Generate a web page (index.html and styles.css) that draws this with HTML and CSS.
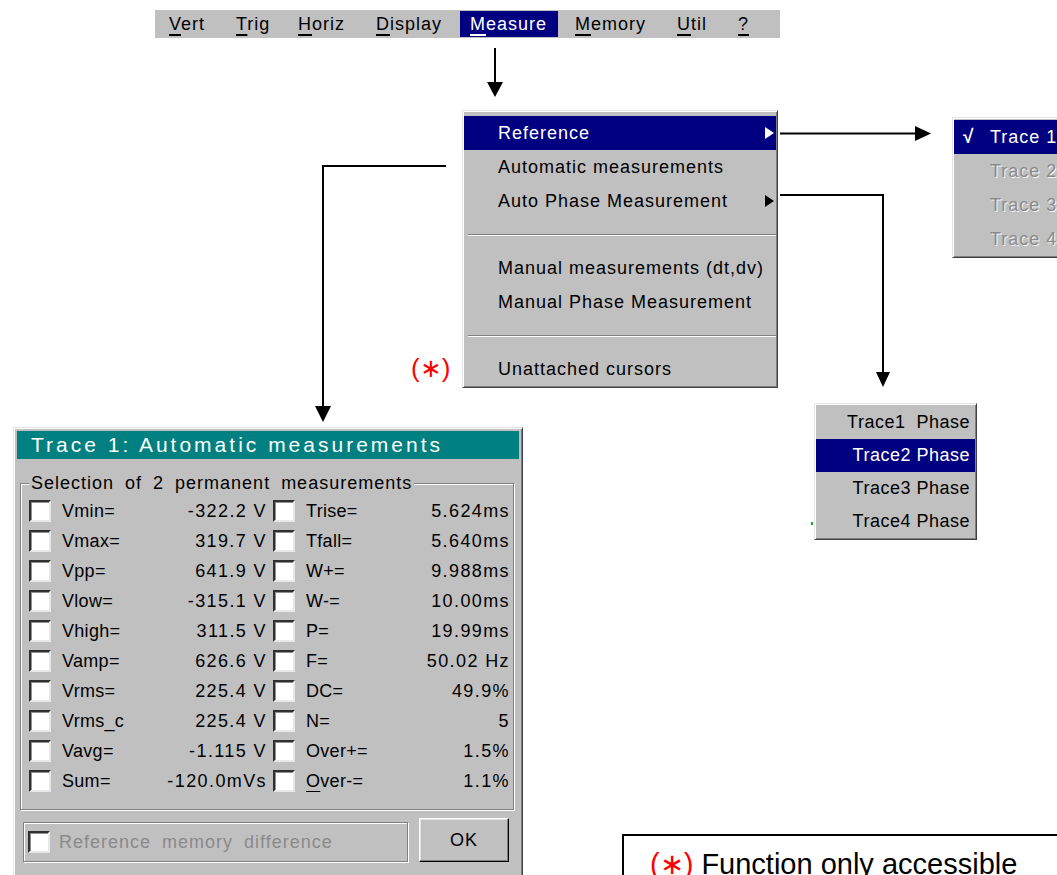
FILE: index.html
```html
<!DOCTYPE html>
<html lang="en">
<head>
<meta charset="utf-8">
<title>Measure menu</title>
<link rel="stylesheet" href="styles.css">
</head>
<body>
<div class="canvas">
  <svg class="wires" width="1057" height="875" viewBox="0 0 1057 875" aria-hidden="true">
    <g stroke="#000" stroke-width="2" fill="none">
      <path d="M495 48 V84"/>
      <path d="M780 133.5 H917"/>
      <path d="M780 195 H883 V374"/>
      <path d="M446 166 H323 V408"/>
    </g>
    <g fill="#000">
      <path d="M487 82 H503 L495 97 Z"/>
      <path d="M915 126 V141 L931 133.5 Z"/>
      <path d="M876 372 H890 L883 387 Z"/>
      <path d="M315 406 H331 L323 422 Z"/>
    </g>
  </svg>

  <nav class="menubar">
    <span class="mb-item"><u>V</u>ert</span>
    <span class="mb-item"><u>T</u>rig</span>
    <span class="mb-item"><u>H</u>oriz</span>
    <span class="mb-item"><u>D</u>isplay</span>
    <span class="mb-item mb-active"><u>M</u>easure</span>
    <span class="mb-item"><u>M</u>emory</span>
    <span class="mb-item"><u>U</u>til</span>
    <span class="mb-item"><u>?</u></span>
  </nav>

  <div class="menu measure-menu">
    <div class="mi hl">Reference<span class="tri"></span></div>
    <div class="mi">Automatic measurements</div>
    <div class="mi">Auto Phase Measurement<span class="tri"></span></div>
    <div class="sep"></div>
    <div class="mi">Manual measurements (dt,dv)</div>
    <div class="mi">Manual Phase Measurement</div>
    <div class="sep"></div>
    <div class="mi">Unattached cursors</div>
  </div>

  <span class="star star-menu">(∗)</span>

  <div class="menu trace-menu">
    <div class="ti hl"><span class="chk">√</span>Trace 1</div>
    <div class="ti dis"><span class="chk"></span>Trace 2</div>
    <div class="ti dis"><span class="chk"></span>Trace 3</div>
    <div class="ti dis"><span class="chk"></span>Trace 4</div>
  </div>

  <div class="menu phase-menu">
    <div class="pi">Trace1&nbsp; Phase</div>
    <div class="pi hl">Trace2 Phase</div>
    <div class="pi">Trace3 Phase</div>
    <div class="pi">Trace4 Phase</div>
  </div>
  <span class="dot"></span>

  <div class="dialog">
    <div class="dlg-title">Trace 1: Automatic measurements</div>
    <fieldset class="group">
      <legend>Selection of 2 permanent measurements</legend>
      <div class="grid">
        <div class="cell"><span class="cb"></span><span class="lbl">Vmin=</span><span class="val">-322.2 V</span></div>
        <div class="cell"><span class="cb"></span><span class="lbl">Trise=</span><span class="val">5.624ms</span></div>
        <div class="cell"><span class="cb"></span><span class="lbl">Vmax=</span><span class="val">319.7 V</span></div>
        <div class="cell"><span class="cb"></span><span class="lbl">Tfall=</span><span class="val">5.640ms</span></div>
        <div class="cell"><span class="cb"></span><span class="lbl">Vpp=</span><span class="val">641.9 V</span></div>
        <div class="cell"><span class="cb"></span><span class="lbl">W+=</span><span class="val">9.988ms</span></div>
        <div class="cell"><span class="cb"></span><span class="lbl">Vlow=</span><span class="val">-315.1 V</span></div>
        <div class="cell"><span class="cb"></span><span class="lbl">W-=</span><span class="val">10.00ms</span></div>
        <div class="cell"><span class="cb"></span><span class="lbl">Vhigh=</span><span class="val">311.5 V</span></div>
        <div class="cell"><span class="cb"></span><span class="lbl">P=</span><span class="val">19.99ms</span></div>
        <div class="cell"><span class="cb"></span><span class="lbl">Vamp=</span><span class="val">626.6 V</span></div>
        <div class="cell"><span class="cb"></span><span class="lbl">F=</span><span class="val">50.02 Hz</span></div>
        <div class="cell"><span class="cb"></span><span class="lbl">Vrms=</span><span class="val">225.4 V</span></div>
        <div class="cell"><span class="cb"></span><span class="lbl">DC=</span><span class="val">49.9%</span></div>
        <div class="cell"><span class="cb"></span><span class="lbl clip">Vrms_c</span><span class="val">225.4 V</span></div>
        <div class="cell"><span class="cb"></span><span class="lbl">N=</span><span class="val">5</span></div>
        <div class="cell"><span class="cb"></span><span class="lbl">Vavg=</span><span class="val">-1.115 V</span></div>
        <div class="cell"><span class="cb"></span><span class="lbl">Over+=</span><span class="val">1.5%</span></div>
        <div class="cell"><span class="cb"></span><span class="lbl">Sum=</span><span class="val">-120.0mVs</span></div>
        <div class="cell"><span class="cb"></span><span class="lbl"><u>O</u>ver-=</span><span class="val">1.1%</span></div>
      </div>
    </fieldset>
    <div class="dlg-foot">
      <div class="refbox"><span class="cb"></span><span class="reftext">Reference memory difference</span></div>
      <div class="okbtn">OK</div>
    </div>
  </div>

  <div class="note"><span class="red">(∗)</span> Function only accessible</div>
</div>
</body>
</html>
```

FILE: styles.css
```css
html, body {
  margin: 0;
  padding: 0;
  background: #fff;
  overflow: hidden;
}

.canvas {
  position: relative;
  width: 1057px;
  height: 875px;
  overflow: hidden;
  font-family: "Liberation Sans", Arial, sans-serif;
  font-size: 18px;
  color: #000;
}

.wires {
  position: absolute;
  left: 0;
  top: 0;
}

/* ---------- menu bar ---------- */
.menubar {
  position: absolute;
  left: 155px;
  top: 10px;
  width: 625px;
  height: 28px;
  box-sizing: border-box;
  padding-left: 4px;
  background: #c0c0c0;
  display: grid;
  grid-template-columns: 67px 62px 78px 94px 105px 102px 61px 1fr;
  align-items: center;
  letter-spacing: 1px;
}

.mb-item {
  display: block;
  width: fit-content;
  padding: 0 10px;
  height: 26px;
  line-height: 26px;
  white-space: nowrap;
}

.mb-item u {
  text-decoration-thickness: 2px;
  text-underline-offset: 4px;
}

.mb-active {
  width: 98px;
  box-sizing: border-box;
  background: #000080;
  color: #fff;
}

/* ---------- generic popup menu ---------- */
.menu {
  position: absolute;
  box-sizing: border-box;
  background: #c0c0c0;
  border: 1px solid;
  border-color: #e4e4e4 #404040 #404040 #e4e4e4;
  box-shadow: inset 1px 1px 0 #fff, inset -1px -1px 0 #808080;
  letter-spacing: 1px;
}

.hl {
  background: #000080;
  color: #fff;
}

.measure-menu {
  left: 462px;
  top: 110px;
  width: 316px;
  height: 278px;
  padding: 5px 1px 1px 1px;
}

.mi {
  height: 34px;
  display: flex;
  align-items: center;
  padding: 0 2px 0 34px;
  white-space: nowrap;
}

.tri {
  margin-left: auto;
  width: 0;
  height: 0;
  border-left: 9px solid currentColor;
  border-top: 6px solid transparent;
  border-bottom: 6px solid transparent;
}

.sep {
  height: 33px;
  display: flex;
  align-items: center;
  padding-left: 4px;
}

.sep::before {
  content: "";
  flex: 1;
  border-top: 1px solid #808080;
  border-bottom: 1px solid #fff;
}

.trace-menu {
  left: 952px;
  top: 117px;
  width: 130px;
  height: 141px;
  padding: 2px 1px 1px 1px;
}

.ti {
  height: 34px;
  display: flex;
  align-items: center;
  padding-left: 9px;
  white-space: nowrap;
}

.chk {
  width: 27px;
  font-weight: bold;
  font-size: 19px;
}

.dis {
  color: #8a8a8a;
  text-shadow: 1px 1px 0 #f4f4f4;
}

.phase-menu {
  left: 814px;
  top: 403px;
  width: 163px;
  height: 137px;
  padding: 2px 1px 1px 1px;
  letter-spacing: 0.5px;
}

.pi {
  height: 33px;
  display: flex;
  align-items: center;
  justify-content: flex-end;
  padding-right: 5px;
  white-space: nowrap;
}

.dot {
  position: absolute;
  left: 811px;
  top: 522px;
  width: 2px;
  height: 3px;
  background: #2a9a2a;
}

.star {
  position: absolute;
  color: #ff0000;
}

.star-menu {
  left: 411px;
  top: 353px;
  font-size: 26px;
}

/* ---------- dialog ---------- */
.dialog {
  position: absolute;
  left: 13px;
  top: 427px;
  width: 510px;
  height: 470px;
  box-sizing: border-box;
  background: #c0c0c0;
  border: 1px solid;
  border-color: #e4e4e4 #404040 #404040 #e4e4e4;
  box-shadow: inset 1px 1px 0 #fff, inset -1px -1px 0 #808080;
  padding: 2px;
}

.dlg-title {
  margin: 1px;
  height: 28px;
  line-height: 28px;
  background: #008080;
  color: #fff;
  font-size: 21px;
  letter-spacing: 3px;
  padding-left: 14px;
  white-space: nowrap;
}

.group {
  margin: 13px 6px 0 4px;
  padding: 0 0 13px 8px;
  border: 1px solid #808080;
  box-shadow: inset 1px 1px 0 #fff, 1px 1px 0 #fff;
  min-width: 0;
}

.group legend {
  padding: 0 2px;
  margin: 0;
  line-height: 22px;
  background: #c0c0c0;
  letter-spacing: 1px;
  word-spacing: 5px;
  white-space: nowrap;
}

.grid {
  margin-top: 2px;
  display: grid;
  grid-template-columns: 237px 236px;
  column-gap: 7px;
  grid-auto-rows: 30px;
}

.cell {
  display: flex;
  align-items: center;
  white-space: nowrap;
}

.cb {
  flex: none;
  width: 22px;
  height: 22px;
  box-sizing: border-box;
  background: #fff;
  border: 2px solid;
  border-color: #303030 #e8e8e8 #e8e8e8 #303030;
  box-shadow: inset 1px 1px 0 #909090;
}

.lbl {
  margin-left: 11px;
  width: 67px;
  overflow: hidden;
  letter-spacing: 0.3px;
}

.lbl u {
  text-decoration-thickness: 2px;
  text-underline-offset: 4px;
}

.clip {
  width: 66px;
}

.val {
  flex: 1;
  text-align: right;
  letter-spacing: 1.4px;
  margin-right: -1px;
}

.dlg-foot {
  display: flex;
  align-items: flex-start;
  gap: 11px;
  margin: 8px 6px 0 7px;
}

.refbox {
  margin-top: 4px;
  width: 385px;
  height: 40px;
  box-sizing: border-box;
  border: 1px solid #808080;
  box-shadow: inset 1px 1px 0 #fff, 1px 1px 0 #fff;
  display: flex;
  align-items: center;
  padding-left: 4px;
}

.reftext {
  margin-left: 9px;
  color: #8a8a8a;
  letter-spacing: 1px;
  word-spacing: 5px;
  white-space: nowrap;
}

.okbtn {
  width: 90px;
  height: 44px;
  box-sizing: border-box;
  border: 1px solid;
  border-color: #fff #000 #000 #fff;
  box-shadow: inset -1px -1px 0 #808080, inset 1px 1px 0 #e4e4e4;
  display: flex;
  align-items: center;
  justify-content: center;
  letter-spacing: 1px;
}

/* ---------- footnote ---------- */
.note {
  position: absolute;
  left: 622px;
  top: 834px;
  width: 480px;
  height: 80px;
  box-sizing: border-box;
  border: 2px solid #000;
  padding: 11px 0 0 26px;
  font-size: 29px;
  white-space: nowrap;
}

.red {
  color: #ff0000;
}
```
